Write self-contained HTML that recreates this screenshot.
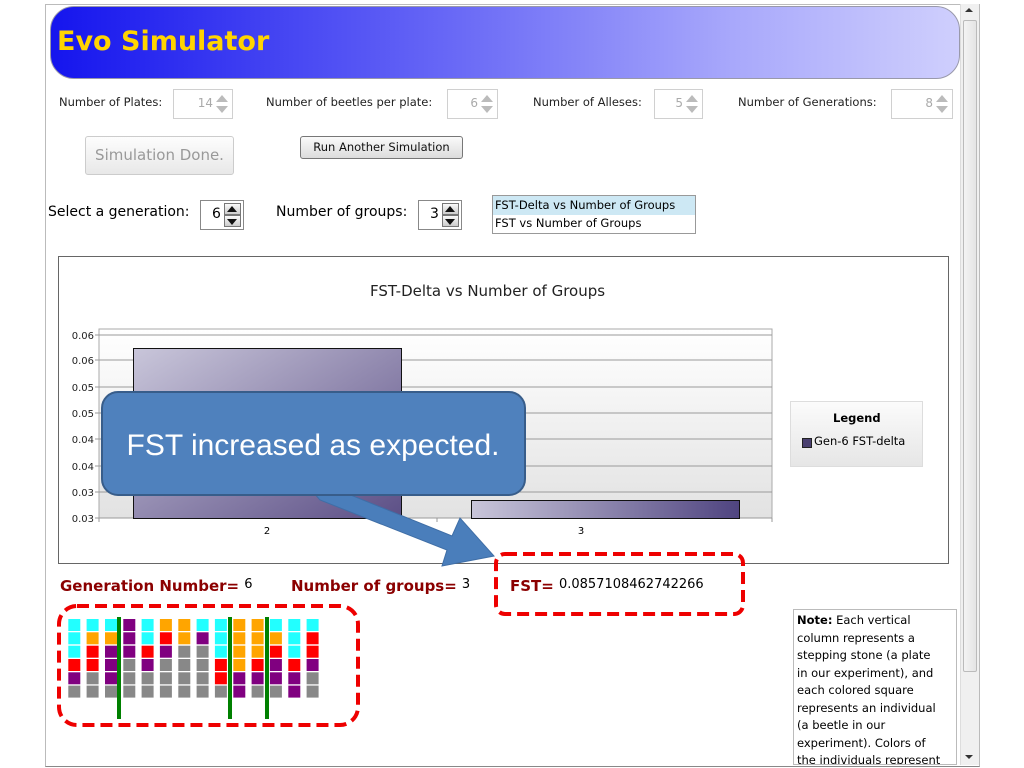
<!DOCTYPE html>
<html><head><meta charset="utf-8"><style>
body{margin:0;width:1024px;height:768px;background:#fff;position:relative;overflow:hidden;font-family:"DejaVu Sans","Liberation Sans",sans-serif;}
.a{position:absolute;white-space:nowrap}
.l{font-size:11.5px;color:#222}
.sp{position:absolute;border:1px solid #d0d0d0;background:#fff;font-size:12px;color:#aaa;box-sizing:border-box}
.sp span{position:absolute;right:19px;top:6px}
.sp i{position:absolute;right:4px;width:0;height:0;border-left:6px solid transparent;border-right:6px solid transparent}
.up{top:5px;border-bottom:7px solid #bbb}
.dn{top:16px;border-top:7px solid #bbb}
.sp2{position:absolute;border:1px solid #888;background:#fff;font-size:14px;color:#000;box-sizing:border-box}
.sp2 b{position:absolute;right:2px;width:17px;height:12px;background:linear-gradient(#fafafa,#ccc);border:1px solid #777;box-sizing:border-box}
.sp2 b i{position:absolute;left:2px;width:0;height:0;border-left:5.5px solid transparent;border-right:5.5px solid transparent}
.dr{color:#8b0000;font-weight:bold;font-size:15px;font-family:"DejaVu Sans",sans-serif}
</style></head><body>
<div class="a" style="left:45px;top:4px;width:933px;height:761px;border:1px solid #bbb;border-bottom:1px solid #888"></div>
<div class="a" style="left:50px;top:6px;width:908px;height:71px;border-radius:24px;background:linear-gradient(90deg,#1515ee 0%,#6a6af6 45%,#a8a8fb 75%,#cfcffd 100%);border:1px solid #99a"></div>
<div class="a" style="left:57px;top:26px;font-size:27px;font-weight:bold;color:#ffd400;font-family:'DejaVu Sans',sans-serif">Evo Simulator</div>
<div class="a" style="left:960px;top:4px;width:18px;height:761px;background:#f0f0f0;border-left:1px solid #ddd"></div>
<div class="a" style="left:963px;top:20px;width:12px;height:650px;background:linear-gradient(90deg,#f4f4f4,#e4e4e4);border:1px solid #bbb;border-radius:2px"></div>
<div class="a" style="left:965px;top:8px;border-left:4px solid transparent;border-right:4px solid transparent;border-bottom:4px solid #333"></div>
<div class="a" style="left:965px;top:755px;border-left:4px solid transparent;border-right:4px solid transparent;border-top:4px solid #333"></div>
<div class="a l" style="left:59px;top:95px">Number of Plates:</div>
<div class="sp" style="left:173px;top:89px;width:60px;height:30px"><span>14</span><i class="up"></i><i class="dn"></i></div>
<div class="a l" style="left:266px;top:95px">Number of beetles per plate:</div>
<div class="sp" style="left:447px;top:89px;width:51px;height:30px"><span>6</span><i class="up"></i><i class="dn"></i></div>
<div class="a l" style="left:533px;top:95px">Number of Alleses:</div>
<div class="sp" style="left:654px;top:89px;width:49px;height:30px"><span>5</span><i class="up"></i><i class="dn"></i></div>
<div class="a l" style="left:738px;top:95px">Number of Generations:</div>
<div class="sp" style="left:891px;top:89px;width:62px;height:30px"><span>8</span><i class="up"></i><i class="dn"></i></div>
<div class="a" style="left:85px;top:136px;width:147px;height:37px;border:1px solid #ccc;border-radius:3px;background:linear-gradient(#fdfdfd,#e8e8e8);color:#999;font-size:15px;text-align:center;line-height:37px">Simulation Done.</div>
<div class="a" style="left:300px;top:136px;width:161px;height:21px;border:1px solid #777;border-radius:3px;background:linear-gradient(#fafafa,#dcdcdc);color:#111;font-size:11.5px;text-align:center;line-height:21px">Run Another Simulation</div>
<div class="a" style="left:48px;top:204px;font-size:14px">Select a generation:</div>
<div class="sp2" style="left:200px;top:200px;width:44px;height:30px"><span style="position:absolute;left:11px;top:5px">6</span><b style="top:2px"><i style="top:2px;border-bottom:6px solid #111"></i></b><b style="top:14px"><i style="top:3px;border-top:6px solid #111"></i></b></div>
<div class="a" style="left:276px;top:204px;font-size:14px">Number of groups:</div>
<div class="sp2" style="left:418px;top:200px;width:44px;height:30px"><span style="position:absolute;left:11px;top:5px">3</span><b style="top:2px"><i style="top:2px;border-bottom:6px solid #111"></i></b><b style="top:14px"><i style="top:3px;border-top:6px solid #111"></i></b></div>
<div class="a" style="left:492px;top:195px;width:204px;height:39px;border:1px solid #999;font-size:11.5px;box-sizing:border-box">
<div style="background:#cde8f4;padding:2px 2px;height:15px">FST-Delta vs Number of Groups</div>
<div style="padding:1px 2px">FST vs Number of Groups</div></div>
<div class="a" style="left:58px;top:256px;width:889px;height:306px;border:1px solid #666"></div>
<div class="a" style="left:370px;top:282px;font-size:15px;color:#222">FST-Delta vs Number of Groups</div>
<div class="a" style="left:790px;top:401px;width:131px;height:64px;border:1px solid #ddd;background:linear-gradient(#fbfbfb,#e6e6e6)"></div>
<div class="a" style="left:833px;top:411px;font-size:11.5px;font-weight:bold">Legend</div>
<div class="a" style="left:802px;top:438px;width:8px;height:8px;background:#4a4070;border:1px solid #222"></div>
<div class="a" style="left:814px;top:434px;font-size:11.5px">Gen-6 FST-delta</div>
<svg class="a" style="left:0;top:0" width="1024" height="768" font-family="DejaVu Sans,sans-serif">
<defs>
<linearGradient id="pg" x1="0" y1="0" x2="0" y2="1"><stop offset="0" stop-color="#fff"/><stop offset="1" stop-color="#e2e2e2"/></linearGradient>
<linearGradient id="bg" x1="0" y1="0" x2="1" y2="1"><stop offset="0" stop-color="#c9c6da"/><stop offset="1" stop-color="#5c4f86"/></linearGradient>
<linearGradient id="bg2" x1="0" y1="0" x2="1" y2="0"><stop offset="0" stop-color="#c9c6da"/><stop offset="1" stop-color="#4f4480"/></linearGradient>
</defs>
<rect x="99" y="329" width="673" height="189" fill="url(#pg)" stroke="#aaa"/>
<g stroke="#999" stroke-width="1">
<line x1="95" y1="335" x2="772" y2="335"/><line x1="95" y1="360" x2="772" y2="360"/><line x1="95" y1="387" x2="772" y2="387"/><line x1="95" y1="413" x2="772" y2="413"/><line x1="95" y1="439" x2="772" y2="439"/><line x1="95" y1="466" x2="772" y2="466"/><line x1="95" y1="492" x2="772" y2="492"/><line x1="95" y1="518" x2="772" y2="518"/>
<line x1="99" y1="518" x2="99" y2="522"/><line x1="437" y1="518" x2="437" y2="522"/><line x1="772" y1="518" x2="772" y2="522"/>
</g>
<g font-size="10" fill="#222" text-anchor="end">
<text x="94" y="339">0.06</text><text x="94" y="364">0.06</text><text x="94" y="391">0.05</text><text x="94" y="417">0.05</text><text x="94" y="443">0.04</text><text x="94" y="470">0.04</text><text x="94" y="496">0.03</text><text x="94" y="522">0.03</text>
</g>
<rect x="133.5" y="348.5" width="268" height="170" fill="url(#bg)" stroke="#111"/>
<rect x="471.5" y="500.5" width="268" height="18" fill="url(#bg2)" stroke="#111"/>
<text x="267" y="534" font-size="10" text-anchor="middle">2</text>
<text x="581" y="534" font-size="10" text-anchor="middle">3</text>
<rect x="496" y="554" width="247" height="60" rx="9" fill="none" stroke="#e00" stroke-width="4" stroke-dasharray="12,6"/>
<rect x="59" y="606" width="299" height="119" rx="18" fill="none" stroke="#e00" stroke-width="4" stroke-dasharray="12,6"/>
<polygon points="313,492 326,485 452,536 460,518 494,556 442,566 447,550 320,500" fill="#4a7ebb" stroke="#3f6ea6" stroke-width="1"/>
<rect x="102" y="392" width="423" height="103" rx="16" fill="#4f81bd" stroke="#385d8a" stroke-width="2"/>
<text x="313" y="455" font-size="30" fill="#fff" text-anchor="middle" font-family="Liberation Sans,sans-serif">FST increased as expected.</text>
<g id="g2"></g>
</svg>
<div class="a" style="left:60px;top:576px"><span class="dr">Generation Number=</span> <span style="font-size:13px;vertical-align:3px">6</span></div>
<div class="a" style="left:291px;top:576px"><span class="dr">Number of groups=</span> <span style="font-size:13px;vertical-align:3px">3</span></div>
<div class="a" style="left:510px;top:576px"><span class="dr">FST=</span> <span style="font-size:13px;vertical-align:3px">0.0857108462742266</span></div>
<div class="a" style="left:793px;top:609px;width:164px;height:156px;border:1px solid #bbb;overflow:hidden;font-size:11.5px;line-height:17.5px;padding:2px 12px 2px 3px;box-sizing:border-box;white-space:normal"><b>Note:</b> Each vertical column represents a stepping stone (a plate in our experiment), and each colored square represents an individual (a beetle in our experiment). Colors of the individuals represent</div>
<script>
var C={c:"#22ffff",o:"#ffa500",r:"#ff0000",p:"#800080",g:"#888888"};
var cols=["cccrpg","corrgg","copppg","pppggg","ccrpgg","orpggg","oogggg","cpgggg","cccrrg","oooopp","ooorpg","corppg","cccrpp","crrpgg"];
var s="";
for(var i=0;i<14;i++){for(var j=0;j<6;j++){var x=68.3+i*18.33,y=619+j*13.33;s+='<rect x="'+x.toFixed(1)+'" y="'+y.toFixed(1)+'" width="12" height="12" fill="'+C[cols[i][j]]+'"/>';}}
[119,230,267].forEach(function(x){s+='<rect x="'+(x-2)+'" y="617" width="4" height="102" fill="#008000"/>';});
document.getElementById("g2").innerHTML=s;
</script>
</body></html>
